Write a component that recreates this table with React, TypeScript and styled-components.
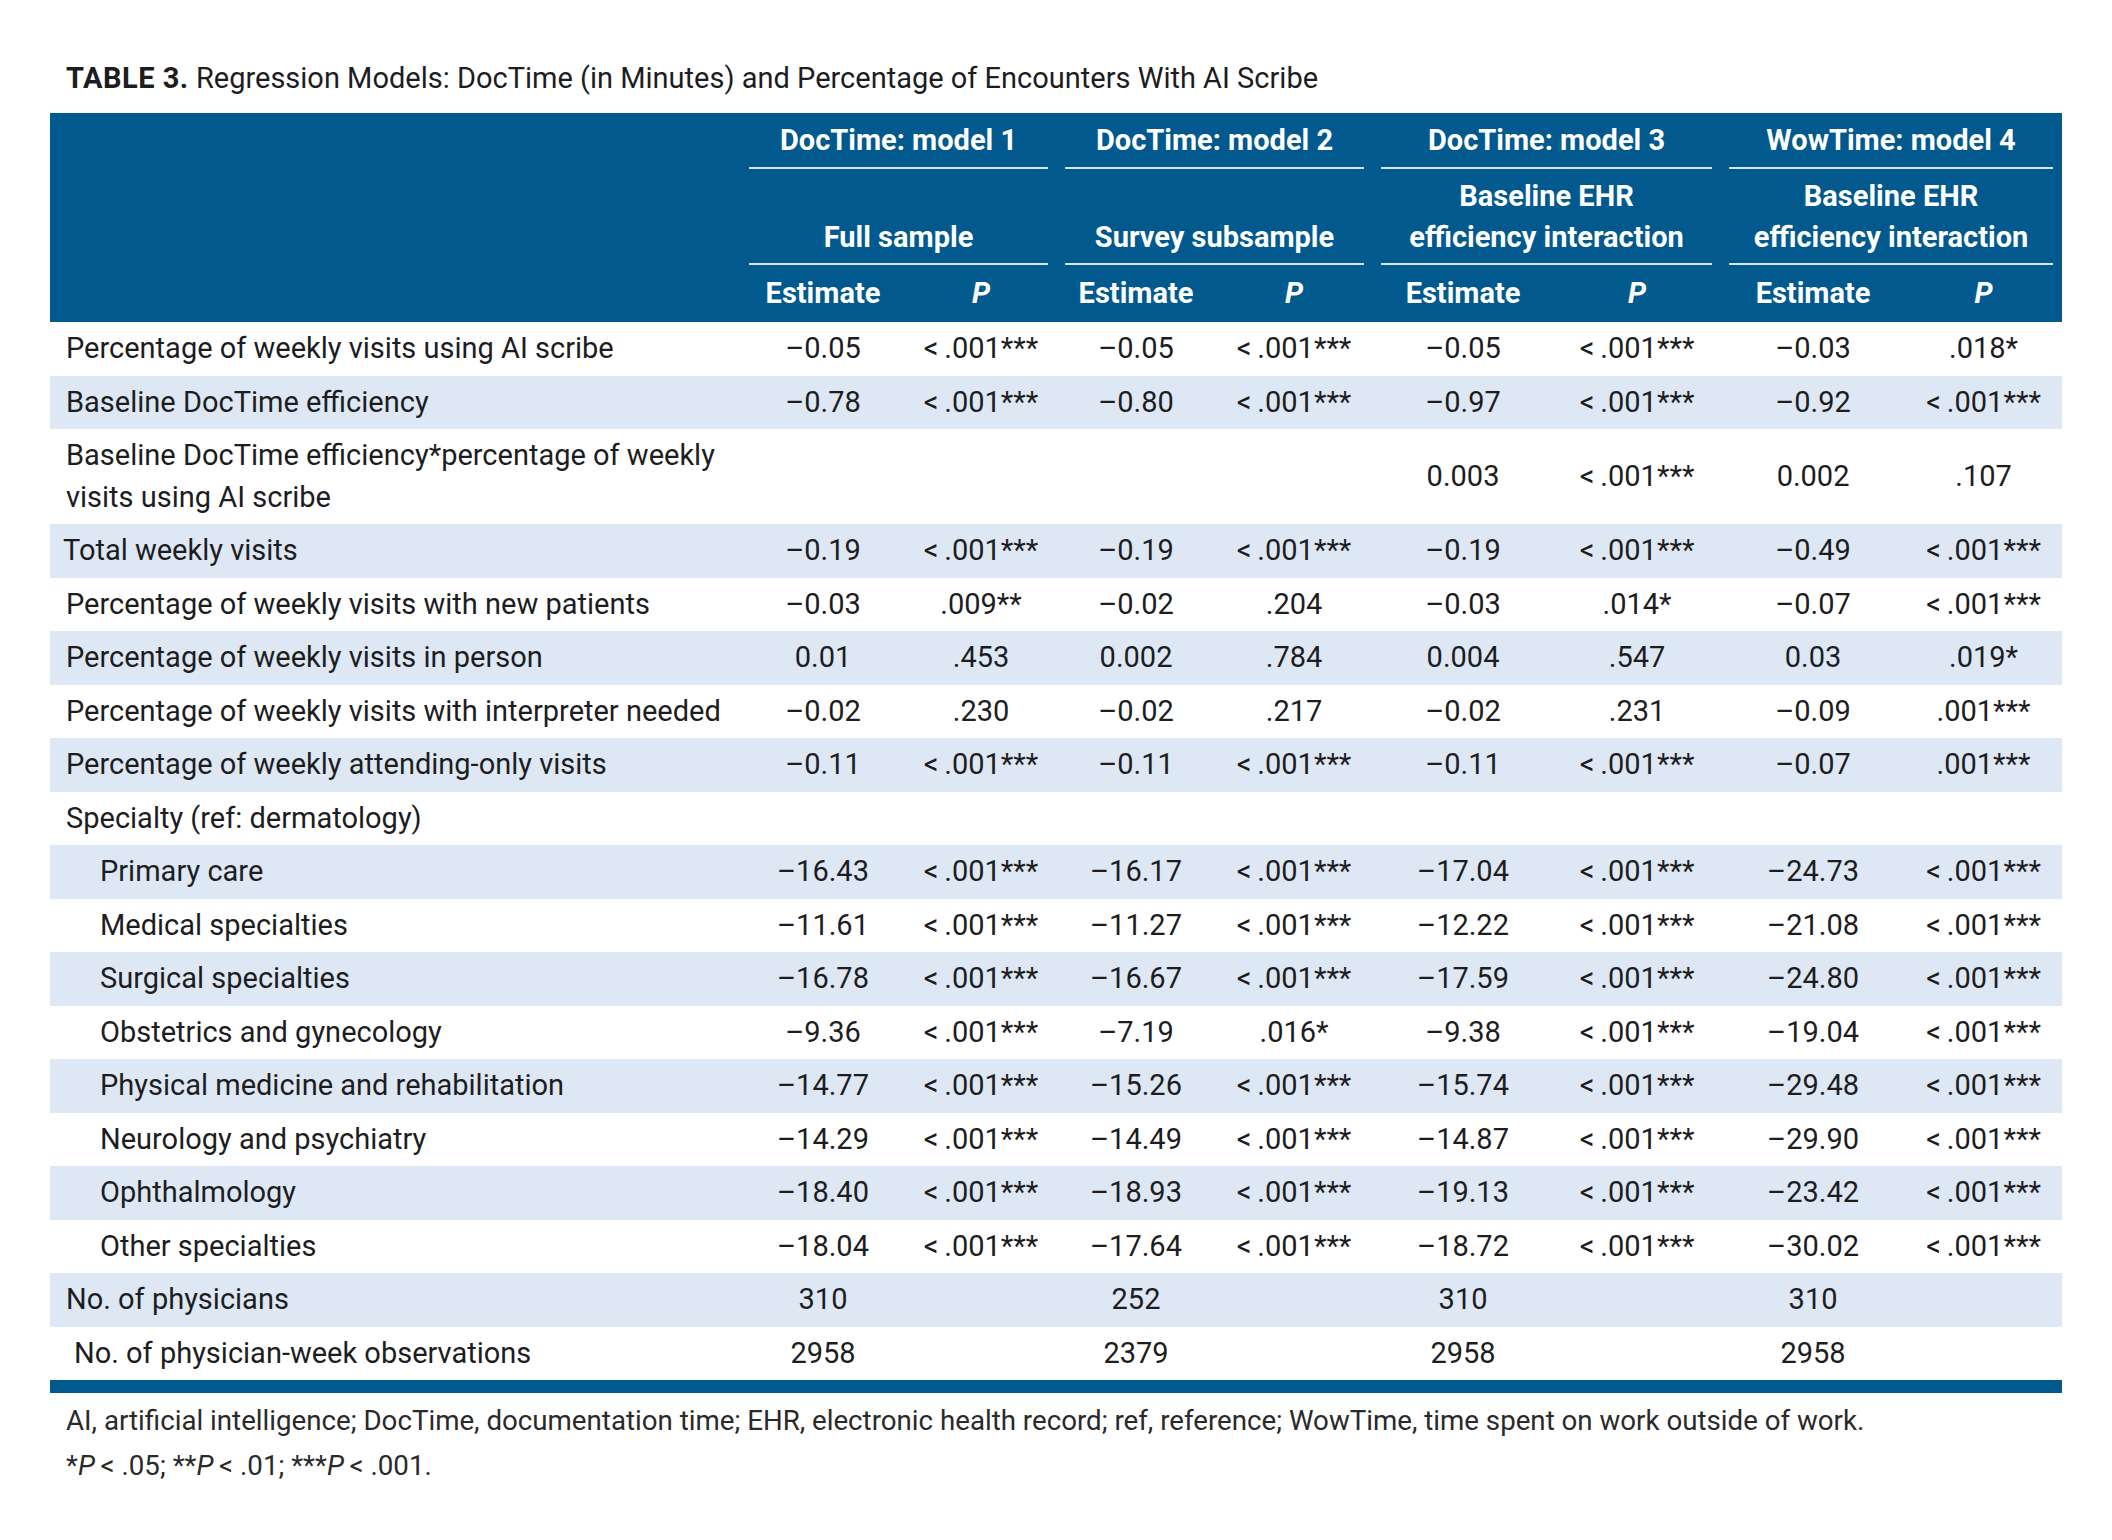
import React from 'react';
import styled, { createGlobalStyle } from 'styled-components';

const colors = {
  blue: '#02598d',
  stripe: '#dde8f4',
  rule: '#d6e4ef',
  ink: '#1d1d1f',
  white: '#ffffff',
};

const GlobalStyle = createGlobalStyle`
  html, body {
    margin: 0;
    padding: 0;
    background: ${colors.white};
  }
  body {
    font-family: Roboto, "Liberation Sans", sans-serif;
    color: ${colors.ink};
  }
`;

const Page = styled.div`
  width: 2112px;
  padding: 58px 50px 40px;
  box-sizing: border-box;
`;

const Title = styled.div`
  padding-left: 16px;
  font-size: 29px;
  line-height: 40px;
  margin-bottom: 15px;
  white-space: nowrap;
`;

const TitleTag = styled.span`
  font-weight: 700;
  letter-spacing: 0.5px;
`;

const Table = styled.table`
  width: 2012px;
  table-layout: fixed;
  border-collapse: collapse;
  border-bottom: 13px solid ${colors.blue};
  font-size: 29px;
`;

const Head = styled.thead`
  background: ${colors.blue};
  color: ${colors.white};
  font-weight: 700;
`;

const GroupCell = styled.th`
  padding: 0 9px 0 8px;
  vertical-align: bottom;
  font-weight: 700;
`;

const GroupLabel = styled.div<{ $height: number }>`
  height: ${(p) => p.$height}px;
  box-sizing: border-box;
  border-bottom: 2px solid ${colors.rule};
  display: flex;
  flex-direction: column;
  justify-content: flex-end;
  align-items: center;
  line-height: 41px;
  padding-bottom: ${(p) => (p.$height > 60 ? 5 : 6)}px;
  white-space: nowrap;
`;

const SubHead = styled.th<{ $italic?: boolean }>`
  height: 55px;
  padding: 0;
  text-align: center;
  font-weight: 700;
  font-style: ${(p) => (p.$italic ? 'italic' : 'normal')};
  vertical-align: middle;
  padding-bottom: 2px;
`;

const Row = styled.tr`
  &:nth-child(even) {
    background: ${colors.stripe};
  }
`;

const LabelCell = styled.td<{ $indent: number }>`
  padding: 6px 0 6px ${(p) => p.$indent}px;
  line-height: 41.5px;
  white-space: nowrap;
  text-align: left;
`;

const ValueCell = styled.td`
  padding: 6px 0;
  line-height: 41.5px;
  text-align: center;
  white-space: nowrap;
`;

const Notes = styled.div`
  padding-left: 16px;
  margin-top: 5px;
  font-size: 27.7px;
  line-height: 45px;
  color: #2a2a2a;
  white-space: nowrap;
`;

const Em = styled.i`
  font-style: italic;
`;

const widths = [691, 164, 152, 158, 158, 180, 168, 184, 157];

const groups = [
  { model: 'DocTime: model 1', sub: ['Full sample'] },
  { model: 'DocTime: model 2', sub: ['Survey subsample'] },
  { model: 'DocTime: model 3', sub: ['Baseline EHR', 'efficiency interaction'] },
  { model: 'WowTime: model 4', sub: ['Baseline EHR', 'efficiency interaction'] },
];

const P3 = '<\u2009.001***';

type DataRow = { label: string[]; indent?: number; values: string[] };

const rows: DataRow[] = [
  { label: ['Percentage of weekly visits using AI scribe'], values: ['–0.05', P3, '–0.05', P3, '–0.05', P3, '–0.03', '.018*'] },
  { label: ['Baseline DocTime efficiency'], values: ['–0.78', P3, '–0.80', P3, '–0.97', P3, '–0.92', P3] },
  {
    label: ['Baseline DocTime efficiency*percentage of weekly', 'visits using AI scribe'],
    values: ['', '', '', '', '0.003', P3, '0.002', '.107'],
  },
  { label: ['Total weekly visits'], indent: 13, values: ['–0.19', P3, '–0.19', P3, '–0.19', P3, '–0.49', P3] },
  { label: ['Percentage of weekly visits with new patients'], values: ['–0.03', '.009**', '–0.02', '.204', '–0.03', '.014*', '–0.07', P3] },
  { label: ['Percentage of weekly visits in person'], values: ['0.01', '.453', '0.002', '.784', '0.004', '.547', '0.03', '.019*'] },
  { label: ['Percentage of weekly visits with interpreter needed'], values: ['–0.02', '.230', '–0.02', '.217', '–0.02', '.231', '–0.09', '.001***'] },
  { label: ['Percentage of weekly attending-only visits'], values: ['–0.11', P3, '–0.11', P3, '–0.11', P3, '–0.07', '.001***'] },
  { label: ['Specialty (ref: dermatology)'], values: ['', '', '', '', '', '', '', ''] },
  { label: ['Primary care'], indent: 50, values: ['–16.43', P3, '–16.17', P3, '–17.04', P3, '–24.73', P3] },
  { label: ['Medical specialties'], indent: 50, values: ['–11.61', P3, '–11.27', P3, '–12.22', P3, '–21.08', P3] },
  { label: ['Surgical specialties'], indent: 50, values: ['–16.78', P3, '–16.67', P3, '–17.59', P3, '–24.80', P3] },
  { label: ['Obstetrics and gynecology'], indent: 50, values: ['–9.36', P3, '–7.19', '.016*', '–9.38', P3, '–19.04', P3] },
  { label: ['Physical medicine and rehabilitation'], indent: 50, values: ['–14.77', P3, '–15.26', P3, '–15.74', P3, '–29.48', P3] },
  { label: ['Neurology and psychiatry'], indent: 50, values: ['–14.29', P3, '–14.49', P3, '–14.87', P3, '–29.90', P3] },
  { label: ['Ophthalmology'], indent: 50, values: ['–18.40', P3, '–18.93', P3, '–19.13', P3, '–23.42', P3] },
  { label: ['Other specialties'], indent: 50, values: ['–18.04', P3, '–17.64', P3, '–18.72', P3, '–30.02', P3] },
  { label: ['No. of physicians'], values: ['310', '', '252', '', '310', '', '310', ''] },
  { label: ['No. of physician-week observations'], indent: 24, values: ['2958', '', '2379', '', '2958', '', '2958', ''] },
];

export default function App() {
  return (
    <Page>
      <GlobalStyle />
      <Title>
        <TitleTag>TABLE 3.</TitleTag> Regression Models: DocTime (in Minutes) and Percentage of
        Encounters With AI Scribe
      </Title>
      <Table>
        <colgroup>
          {widths.map((w, i) => (
            <col key={i} style={{ width: w }} />
          ))}
        </colgroup>
        <Head>
          <tr>
            <th rowSpan={3} />
            {groups.map((g) => (
              <GroupCell key={g.model} colSpan={2}>
                <GroupLabel $height={56}>{g.model}</GroupLabel>
              </GroupCell>
            ))}
          </tr>
          <tr>
            {groups.map((g) => (
              <GroupCell key={g.model} colSpan={2}>
                <GroupLabel $height={96}>
                  {g.sub.map((s) => (
                    <span key={s}>{s}</span>
                  ))}
                </GroupLabel>
              </GroupCell>
            ))}
          </tr>
          <tr>
            {groups.map((g) => (
              <React.Fragment key={g.model}>
                <SubHead>Estimate</SubHead>
                <SubHead $italic>P</SubHead>
              </React.Fragment>
            ))}
          </tr>
        </Head>
        <tbody>
          {rows.map((r, i) => (
            <Row key={i}>
              <LabelCell $indent={r.indent ?? 16}>
                {r.label.map((l, j) => (
                  <React.Fragment key={j}>
                    {j > 0 && <br />}
                    {l}
                  </React.Fragment>
                ))}
              </LabelCell>
              {r.values.map((v, j) => (
                <ValueCell key={j}>{v}</ValueCell>
              ))}
            </Row>
          ))}
        </tbody>
      </Table>
      <Notes>
        AI, artificial intelligence; DocTime, documentation time; EHR, electronic health record;
        ref, reference; WowTime, time spent on work outside of work.
        <br />
        *<Em>P</Em>&thinsp;&lt; .05; **<Em>P</Em>&thinsp;&lt; .01; ***<Em>P</Em>&thinsp;&lt; .001.
      </Notes>
    </Page>
  );
}
